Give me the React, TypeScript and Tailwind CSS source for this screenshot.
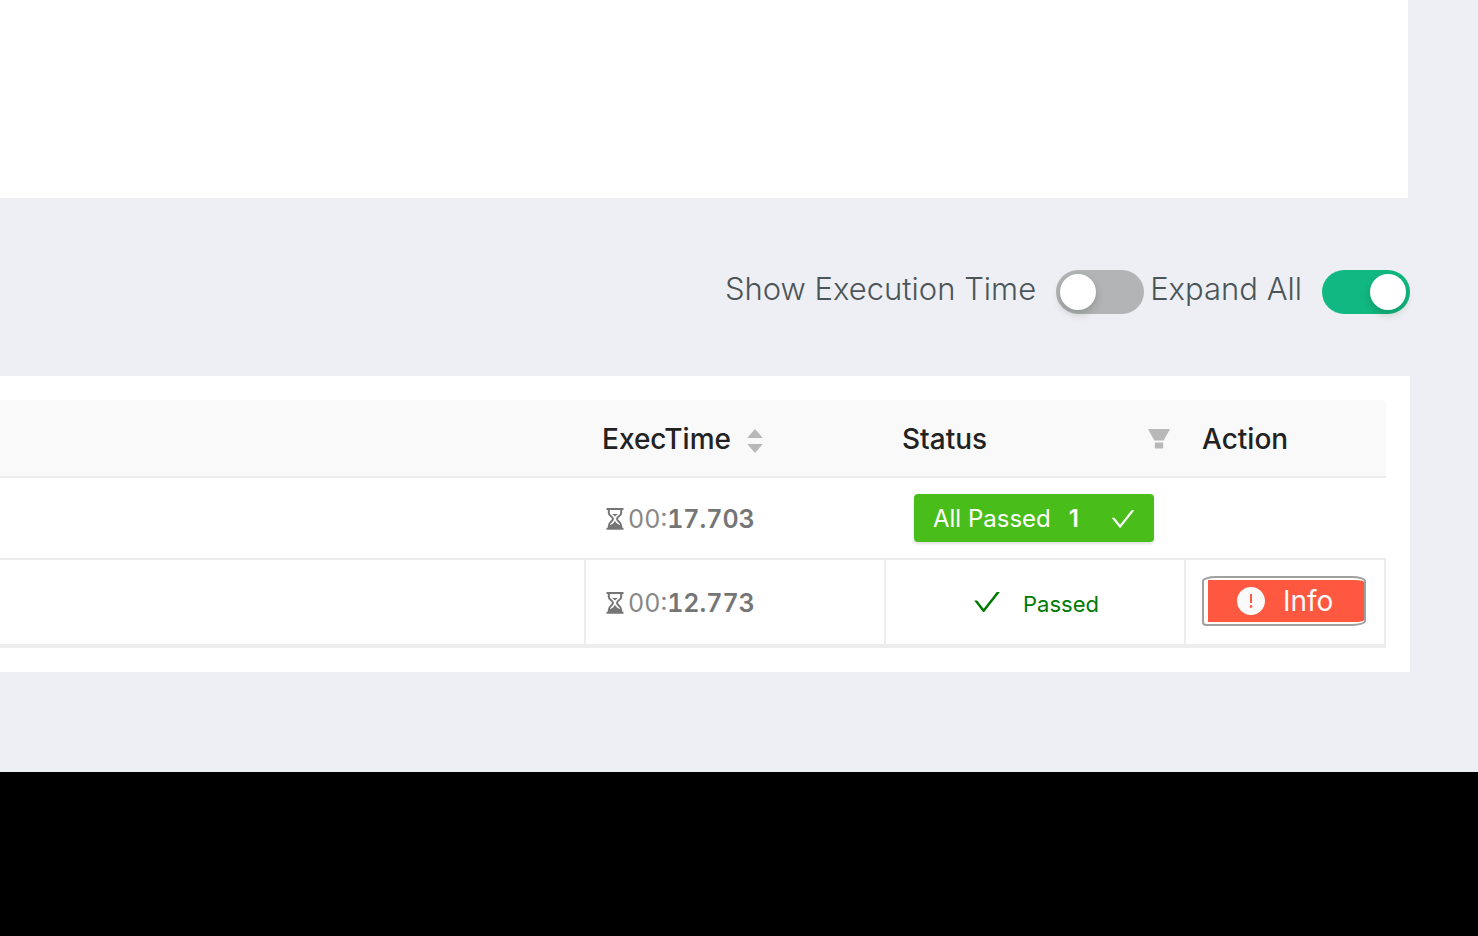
import React from "react";
import { AiFillExclamationCircle, AiOutlineCheck } from "react-icons/ai";

function Toggle({ id, on, label }: { id: string; on: boolean; label: string }) {
  return (
    <div className="flex items-center">
      <label htmlFor={id} className="mr-5 pb-1.5 text-[31px] leading-10 font-light text-[#4b5558]">
        {label}
      </label>
      <span className="relative flex h-11 w-22">
        <input
          id={id}
          type="checkbox"
          role="switch"
          defaultChecked={on}
          className="peer h-11 w-22 cursor-pointer appearance-none rounded-full bg-[#b2b4b5] checked:bg-[#12b881]"
        />
        <span className="pointer-events-none absolute top-1 left-1 size-9 rounded-full bg-white shadow-[0_4px_8px_rgba(0,35,11,0.2)] peer-checked:left-12" />
      </span>
    </div>
  );
}

function Hourglass() {
  return (
    <svg viewBox="0 0 18 22" className="h-[22px] w-[18px]" fill="none" aria-hidden="true">
      <path d="M0.5 1H17.5M0.5 20.8H17.5" stroke="#757575" strokeWidth="2" />
      <path
        d="M2.8 1V5C2.8 8 7 8.5 7 11C7 13.5 2.8 14 2.8 18V21M15.2 1V5C15.2 8 11 8.5 11 11C11 13.5 15.2 14 15.2 18V21"
        stroke="#757575"
        strokeWidth="2"
      />
      <path d="M6.2 6H11.8L9 8.5Z" fill="#757575" />
      <path d="M2.5 18L7 15.5L9 13L11 15.5L15.5 18V21H2.5Z" fill="#757575" />
    </svg>
  );
}

function Duration({ minutes, seconds }: { minutes: string; seconds: string }) {
  return (
    <div className="flex items-center gap-1 pl-1 text-[25px] leading-8 text-[#757575] tabular-nums">
      <Hourglass />
      <span className="text-[#888888]">
        {minutes}:<strong className="font-semibold text-[#757575]">{seconds}</strong>
      </span>
    </div>
  );
}

function SortIcon() {
  return (
    <svg viewBox="0 0 16 24" className="h-6 w-4" fill="#b8b8b8" aria-hidden="true">
      <path d="M8 0L15.8 9H0.2ZM8 24L0.2 15H15.8Z" />
    </svg>
  );
}

function FilterIcon() {
  return (
    <svg viewBox="0 0 22 20" className="h-5 w-[22px]" fill="#b8b8b8" aria-hidden="true">
      <path d="M0.7 0H21.3Q22 0 21.7 0.8L15.6 11.5H6.4L0.3 0.8Q0 0 0.7 0ZM6.8 13.5H15.2V18.8Q15.2 19.5 14.5 19.5H7.5Q6.8 19.5 6.8 18.8Z" />
    </svg>
  );
}

export default function App() {
  return (
    <div className="flex min-h-screen flex-col bg-black font-['Inter',sans-serif]">
      <main className="bg-[#eeeff4] pb-[100px]">
        <section className="mr-[70px] h-[198px] bg-white" />
        <div className="mr-[68px] flex h-[178px] items-center justify-end gap-1.5 pt-2.5">
          <Toggle id="execution-time" on={false} label="Show Execution Time" />
          <Toggle id="expand-all" on={true} label="Expand All" />
        </div>
        <section className="mr-[68px] bg-white py-6 pr-6">
          <table className="w-full table-fixed border-separate border-spacing-0">
            <colgroup>
              <col />
              <col className="w-[300px]" />
              <col className="w-[300px]" />
              <col className="w-[200px]" />
            </colgroup>
            <thead>
              <tr className="h-[78px] text-left text-[28px] leading-9 text-[#222222] *:border-b-2 *:border-[#ededed] *:bg-[#f9f9f9] *:font-medium">
                <th aria-label="Test" />
                <th className="px-4 pt-0.5">
                  <span className="flex items-center gap-4">
                    ExecTime
                    <button type="button" aria-label="Sort by ExecTime" className="pt-1">
                      <SortIcon />
                    </button>
                  </span>
                </th>
                <th className="px-4 pt-0.5">
                  <span className="flex items-center justify-between">
                    Status
                    <button type="button" aria-label="Filter by status">
                      <FilterIcon />
                    </button>
                  </span>
                </th>
                <th className="rounded-tr px-4 pt-0.5">Action</th>
              </tr>
            </thead>
            <tbody>
              <tr className="h-[82px] *:border-b-2 *:border-[#ededed]">
                <td />
                <td className="px-4 pt-0.5">
                  <Duration minutes="00" seconds="17.703" />
                </td>
                <td className="pl-7">
                  <button
                    type="button"
                    className="flex h-12 w-60 items-center rounded bg-[#49be1b] pt-0.5 pr-[17px] pl-[19px] text-2xl text-white shadow-[0_2px_3px_rgba(0,0,0,0.12)]"
                  >
                    All Passed
                    <strong className="ml-[18px] font-semibold">1</strong>
                    <AiOutlineCheck className="ml-auto size-7" />
                  </button>
                </td>
                <td />
              </tr>
              <tr className="h-[88px] *:border-r-2 *:border-b-4 *:border-[#ededed]">
                <td />
                <td className="px-4 pt-0.5">
                  <Duration minutes="00" seconds="12.773" />
                </td>
                <td className="px-4">
                  <div className="flex items-center justify-center gap-5 text-[22px] leading-8 text-[#007a00]">
                    <AiOutlineCheck className="size-8" />
                    <span className="pt-1">Passed</span>
                  </div>
                </td>
                <td className="px-4 pb-0.5">
                  <button
                    type="button"
                    className="flex h-[50px] w-[164px] rounded-[14px/5px] rounded-bl-sm border-2 border-[#a0a0a0] bg-white py-[2px] pl-1"
                  >
                    <span className="flex h-full grow items-center gap-4 rounded-[10px/2px] rounded-l-none bg-[#ff5840] pl-[27px] text-[28px] leading-8 text-[#fafafa]">
                      <AiFillExclamationCircle className="size-8" />
                      Info
                    </span>
                  </button>
                </td>
              </tr>
            </tbody>
          </table>
        </section>
      </main>
    </div>
  );
}
